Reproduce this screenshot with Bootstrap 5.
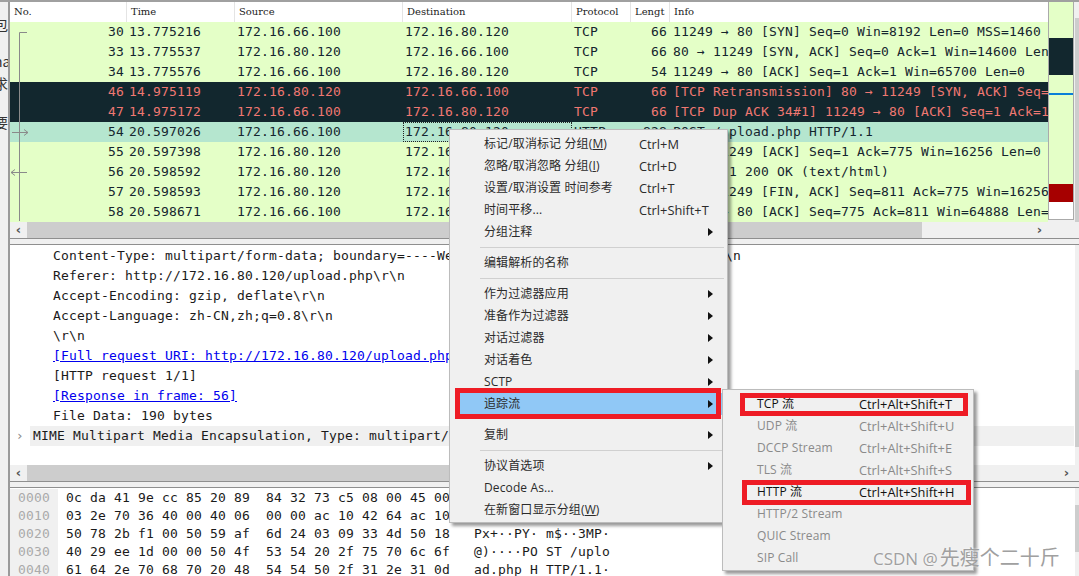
<!DOCTYPE html>
<html lang="zh"><head><meta charset="utf-8"><title>Wireshark</title>
<link href="https://cdn.jsdelivr.net/npm/bootstrap@5.3.0/dist/css/bootstrap.min.css" rel="stylesheet">
<style>
html,body{height:576px;overflow:hidden;background:#fff}
body{font-family:"DejaVu Sans Mono",monospace;color:#14252e;position:relative}
.shell{height:576px;background:#f0f0f0;border-top:2px solid #a0a0a0}
.strip{width:10px;flex:none;border-right:2px solid #9a9a9a;overflow:hidden;font:14px/20px "Noto Sans CJK SC",sans-serif;color:#333;background:#f0f0f0}
.strip div{width:30px;height:20px;margin-left:-6px}
.s1{margin-top:12px}.s2{margin-top:17px}.s3{margin-top:2px}.s4{margin-top:19px}
.mainp{flex:1;min-width:0;background:#fff}
.toparea{height:236px;background:#f0f0f0}
.listp{width:1038px;flex:none}
.rowsbox{overflow:hidden}
.cols{display:grid;grid-template-columns:117px 108px 168px 169px 59px 39px 1fr;white-space:nowrap}
.hd{height:20px;background:#fff;font:10px/20px "DejaVu Serif",serif;color:#222}
.hd span{padding-left:4px;border-right:1px solid #e4e4e4}
.hd span:last-child{border:0}
.rw{height:20px;font-size:13px;line-height:20px;letter-spacing:.174px;background:#e4ffc7;overflow:hidden}
.rw.dk{background:#12272e;color:#ef7872}
.rw.sel{background:#b5e6cf}
.rw span{padding-left:2px}
.rw span:first-child,.rw span:nth-child(6){text-align:right;padding:0 3px 0 0}
.rw span:last-child{padding-left:3px}
.focusc{outline:1px dotted #222;outline-offset:-1px}
.mini{width:26px;height:218px;flex:none;background:#e4ffc7;border:1px solid #aaa;border-top:0;display:flex;flex-direction:column}
.mini i{display:block}
.m1{height:36px}.m2{height:37px;background:#12272e}.m3{height:18px}.m4{height:2px;background:#0a7fd8}.m5{height:89px}.m6{height:18px;background:#a60000}.m7{flex:1;background:#fff}
.vs{flex:1;height:220px;background:#f0f0f0;padding-top:16px}
.vs i{display:block;height:204px;margin-left:1px;background:#cdcdcd}
.hsb{height:16px;background:#f0f0f0;display:flex;align-items:center}
.thumb{height:16px;background:#cdcdcd}
.chev{width:17px;text-align:center;color:#555;font:bold 13px/16px "DejaVu Sans",sans-serif;flex:none}
.hsb .pad4{width:4px;flex:none}
.split{height:7px;background:#f0f0f0;border-top:1px solid #8f8f8f;border-bottom:1px solid #8f8f8f}
.dtwrap{height:220px;background:#f0f0f0}
.dt{height:220px;width:1065px;flex:none;background:#fff;overflow:hidden;font-size:13px;line-height:20px;letter-spacing:.174px;color:#1a1a1a;padding-top:1px}
.vbar{flex:1;min-width:0}
.vbar i{display:block;background:#cdcdcd}
.v1{height:77px;margin-top:125px}
.v2{height:47px;margin-top:17px}
.dl{height:20px;padding-left:43px;white-space:pre}
.dl a{color:#0000ee;text-decoration:underline}
.dm{display:flex;height:20px;margin-right:1px;white-space:pre}
.dm b{font-weight:400;width:20px;color:#888;text-align:center;font-family:"DejaVu Sans",sans-serif;font-size:13px}
.dm span{flex:1;background:#f0f0f0;padding-left:3px;overflow:hidden}
.hxwrap{height:88px;background:#f0f0f0}
.hx{font-size:13px;line-height:18px;letter-spacing:.174px;overflow:hidden;height:88px;width:1065px;flex:none;padding-top:1px;background:#fff;color:#1a1a1a}
.hr{display:flex;height:18px;white-space:pre}
.off{width:48px;background:#f0f0f0;color:#aaa;padding-left:8px;flex:none}
.hxv{padding-left:8px;width:416px;flex:none}
.menu{position:absolute;background:#f0f0f0;border:1px solid #bcbcbc;box-shadow:3px 3px 3px rgba(0,0,0,.4);font:12px/22px "Open Sans","Noto Sans CJK SC",sans-serif;color:#2b2b2b;padding:3px 0 0}
.m-a{left:449px;top:129px;width:279px;height:394px}
.m-b{left:722px;top:389px;width:252px;height:182px}
.it{height:22px;display:flex;padding-left:34px;position:relative;white-space:nowrap}
.it .lab{width:155px;flex:none;letter-spacing:.12px}
.m-b .it .lab{width:102px}
.sc{font-size:12.8px}
.it .arr{position:absolute;right:14px;top:7px;width:0;height:0;border-left:5px solid #111;border-top:4px solid transparent;border-bottom:4px solid transparent}
.m-a .it.hl{background:#90c8f6;margin:0 1px 0 5px;padding-left:29px}
.m-a .it.hl .arr{right:13px}
.dis{color:#8a8a8a}
.blk{color:#111}
.sp{height:9px;position:relative}
.sp::after{content:"";position:absolute;left:30px;right:3px;top:4px;height:1px;background:#d0d0d0}
.sp.none::after{display:none}
.u{text-decoration:underline}
.redb{position:absolute;border:5px solid #ee1c25;pointer-events:none}
.r1{left:455px;top:388px;width:266px;height:31px}
.r2{left:740px;top:393px;width:228px;height:23px}
.r3{left:742px;top:480px;width:229px;height:25px}
.wm{position:absolute;left:873px;top:544px;font:17px/28px "Open Sans","Noto Sans CJK SC",sans-serif;color:#a0a0a0;text-shadow:0 0 2px #fff;white-space:nowrap}
.wm span{font-size:20px;margin-left:2px}
.trace{position:absolute;left:0;top:0}
</style></head><body>
<div class="shell d-flex flex-column">
<div class="d-flex flex-grow-1">
<div class="strip"><div class="s1">包</div><div class="s2">na</div><div class="s3">求:</div><div class="s4">要请</div></div>
<div class="mainp d-flex flex-column">
<div class="toparea d-flex">
<div class="listp">
<div class="rowsbox">
<div class="cols hd"><span>No.</span><span>Time</span><span>Source</span><span>Destination</span><span>Protocol</span><span>Lengt</span><span>Info</span></div>
<div class="cols rw"><span>30</span><span>13.775216</span><span>172.16.66.100</span><span>172.16.80.120</span><span>TCP</span><span>66</span><span>11249 → 80 [SYN] Seq=0 Win=8192 Len=0 MSS=1460 WS=256</span></div>
<div class="cols rw"><span>33</span><span>13.775537</span><span>172.16.80.120</span><span>172.16.66.100</span><span>TCP</span><span>66</span><span>80 → 11249 [SYN, ACK] Seq=0 Ack=1 Win=14600 Len=0</span></div>
<div class="cols rw"><span>34</span><span>13.775576</span><span>172.16.66.100</span><span>172.16.80.120</span><span>TCP</span><span>54</span><span>11249 → 80 [ACK] Seq=1 Ack=1 Win=65700 Len=0</span></div>
<div class="cols rw dk"><span>46</span><span>14.975119</span><span>172.16.80.120</span><span>172.16.66.100</span><span>TCP</span><span>66</span><span>[TCP Retransmission] 80 → 11249 [SYN, ACK] Seq=0 Ack=1</span></div>
<div class="cols rw dk"><span>47</span><span>14.975172</span><span>172.16.66.100</span><span>172.16.80.120</span><span>TCP</span><span>66</span><span>[TCP Dup ACK 34#1] 11249 → 80 [ACK] Seq=1 Ack=1 Win=65700</span></div>
<div class="cols rw sel"><span>54</span><span>20.597026</span><span>172.16.66.100</span><span class="focusc">172.16.80.120</span><span>HTTP</span><span>828</span><span>POST /upload.php HTTP/1.1</span></div>
<div class="cols rw"><span>55</span><span>20.597398</span><span>172.16.80.120</span><span>172.16.66.100</span><span>TCP</span><span>54</span><span>80 → 11249 [ACK] Seq=1 Ack=775 Win=16256 Len=0</span></div>
<div class="cols rw"><span>56</span><span>20.598592</span><span>172.16.80.120</span><span>172.16.66.100</span><span>HTTP</span><span>90</span><span>HTTP/1.1 200 OK  (text/html)</span></div>
<div class="cols rw"><span>57</span><span>20.598593</span><span>172.16.80.120</span><span>172.16.66.100</span><span>TCP</span><span>54</span><span>80 → 11249 [FIN, ACK] Seq=811 Ack=775 Win=16256 Len=0</span></div>
<div class="cols rw"><span>58</span><span>20.598671</span><span>172.16.66.100</span><span>172.16.80.120</span><span>TCP</span><span>54</span><span>11249 → 80 [ACK] Seq=775 Ack=811 Win=64888 Len=0</span></div>
</div>
<div class="hsb"><span class="chev">‹</span><span class="thumb" style="width:895px"></span><span class="flex-grow-1"></span><span class="chev">›</span></div>
</div>
<div class="mini"><i class="m1"></i><i class="m2"></i><i class="m3"></i><i class="m4"></i><i class="m5"></i><i class="m6"></i><i class="m7"></i></div>
<div class="vs"><i></i></div>
</div>
<div class="split"></div>
<div class="dtwrap d-flex">
<div class="dt">
<div class="dl">Content-Type: multipart/form-data; boundary=----WebKitFormBoundaryAbCdEfGhIjKlMnOp\r\n</div>
<div class="dl">Referer: http://172.16.80.120/upload.php\r\n</div>
<div class="dl">Accept-Encoding: gzip, deflate\r\n</div>
<div class="dl">Accept-Language: zh-CN,zh;q=0.8\r\n</div>
<div class="dl">\r\n</div>
<div class="dl"><a href="#">[Full request URI: http://172.16.80.120/upload.php]</a></div>
<div class="dl">[HTTP request 1/1]</div>
<div class="dl"><a href="#">[Response in frame: 56]</a></div>
<div class="dl">File Data: 190 bytes</div>
<div class="dm"><b>›</b><span>MIME Multipart Media Encapsulation, Type: multipart/form-data</span></div>
</div>
<div class="vbar"><i class="v1"></i></div>
</div>
<div class="hsb"><span class="chev">‹</span><span class="thumb" style="width:800px"></span><span class="flex-grow-1"></span><span class="chev">›</span><span class="pad4"></span></div>
<div class="split"></div>
<div class="hxwrap d-flex">
<div class="hx">
<div class="hr"><span class="off">0000</span><span class="hxv">0c da 41 9e cc 85 20 89  84 32 73 c5 08 00 45 00</span><span>··A···· ·2s···E·</span></div>
<div class="hr"><span class="off">0010</span><span class="hxv">03 2e 70 36 40 00 40 06  00 00 ac 10 42 64 ac 10</span><span>·.p6@·@· ····Bd··</span></div>
<div class="hr"><span class="off">0020</span><span class="hxv">50 78 2b f1 00 50 59 af  6d 24 03 09 33 4d 50 18</span><span>Px+··PY· m$··3MP·</span></div>
<div class="hr"><span class="off">0030</span><span class="hxv">40 29 ee 1d 00 00 50 4f  53 54 20 2f 75 70 6c 6f</span><span>@)····PO ST /uplo</span></div>
<div class="hr"><span class="off">0040</span><span class="hxv">61 64 2e 70 68 70 20 48  54 54 50 2f 31 2e 31 0d</span><span>ad.php H TTP/1.1·</span></div>
</div>
<div class="vbar"><i class="v2"></i></div>
</div>
</div>
</div>
</div>
<svg class="trace" width="40" height="222" viewBox="0 0 40 222" fill="none" stroke="#8a8a8a">
<path d="M19.5 221V32.5H27"/><path d="M12 132.5H28M24 129.5l4 3-4 3"/><path d="M11 172.5H27M15 169.5l-4 3 4 3"/>
</svg>
<div class="menu m-a">
<div class="it"><span class="lab">标记/取消标记 分组(<span class="u">M</span>)</span><span class="sc">Ctrl+M</span></div>
<div class="it"><span class="lab">忽略/取消忽略 分组(<span class="u">I</span>)</span><span class="sc">Ctrl+D</span></div>
<div class="it"><span class="lab">设置/取消设置 时间参考</span><span class="sc">Ctrl+T</span></div>
<div class="it"><span class="lab">时间平移...</span><span class="sc">Ctrl+Shift+T</span></div>
<div class="it"><span class="lab">分组注释</span><i class="arr"></i></div>
<div class="sp"></div>
<div class="it"><span class="lab">编辑解析的名称</span></div>
<div class="sp"></div>
<div class="it"><span class="lab">作为过滤器应用</span><i class="arr"></i></div>
<div class="it"><span class="lab">准备作为过滤器</span><i class="arr"></i></div>
<div class="it"><span class="lab">对话过滤器</span><i class="arr"></i></div>
<div class="it"><span class="lab">对话着色</span><i class="arr"></i></div>
<div class="it"><span class="lab">SCTP</span><i class="arr"></i></div>
<div class="it hl"><span class="lab">追踪流</span><i class="arr"></i></div>
<div class="sp none"></div>
<div class="it"><span class="lab">复制</span><i class="arr"></i></div>
<div class="sp"></div>
<div class="it"><span class="lab">协议首选项</span><i class="arr"></i></div>
<div class="it"><span class="lab">Decode As...</span></div>
<div class="it"><span class="lab">在新窗口显示分组(<span class="u">W</span>)</span></div>
</div>
<div class="menu m-b">
<div class="it blk"><span class="lab">TCP 流</span><span class="sc">Ctrl+Alt+Shift+T</span></div>
<div class="it dis"><span class="lab">UDP 流</span><span class="sc">Ctrl+Alt+Shift+U</span></div>
<div class="it dis"><span class="lab">DCCP Stream</span><span class="sc">Ctrl+Alt+Shift+E</span></div>
<div class="it dis"><span class="lab">TLS 流</span><span class="sc">Ctrl+Alt+Shift+S</span></div>
<div class="it blk"><span class="lab">HTTP 流</span><span class="sc">Ctrl+Alt+Shift+H</span></div>
<div class="it dis"><span class="lab">HTTP/2 Stream</span></div>
<div class="it dis"><span class="lab">QUIC Stream</span></div>
<div class="it dis"><span class="lab">SIP Call</span></div>
</div>
<div class="redb r1"></div><div class="redb r2"></div><div class="redb r3"></div>
<div class="wm">CSDN @<span>先瘦个二十斤</span></div>
</body></html>
